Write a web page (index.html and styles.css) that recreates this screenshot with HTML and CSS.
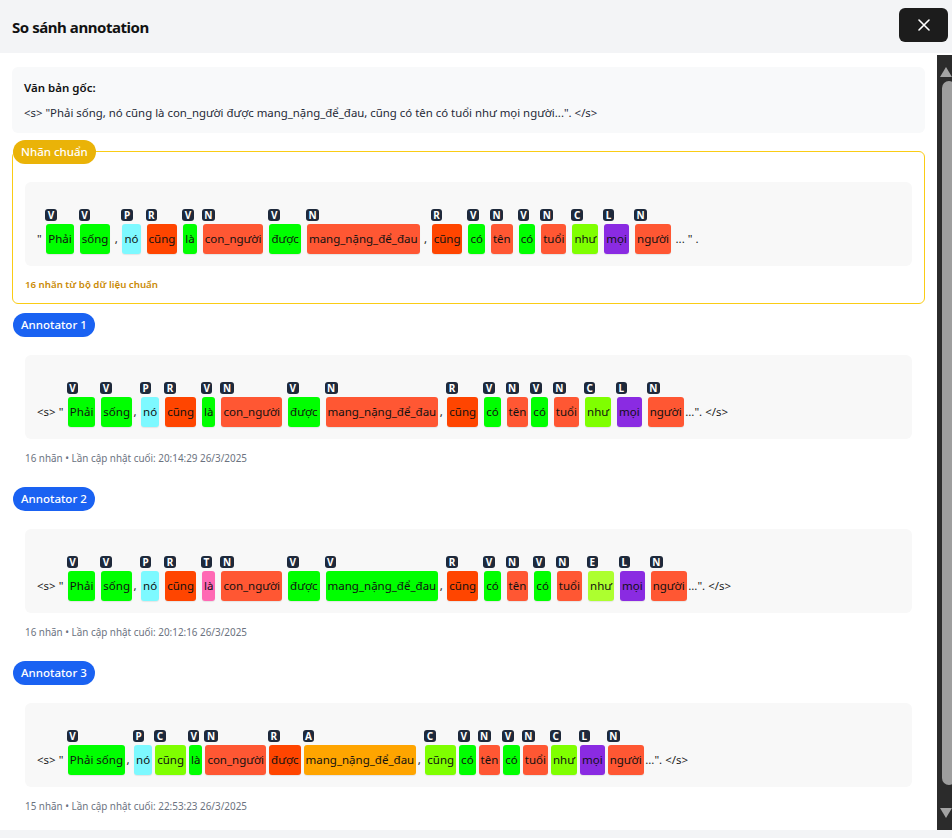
FILE: index.html
```html
<!DOCTYPE html>
<html lang="vi">
<head>
<meta charset="utf-8">
<title>So sánh annotation</title>
<link rel="stylesheet" href="styles.css">
</head>
<body>
<div class="modal">
  <div class="header">
    <h2 class="title">So sánh annotation</h2>
    <button class="close" aria-label="Đóng"><svg width="12" height="12" viewBox="0 0 12 12"><path d="M1 1L11 11M11 1L1 11" stroke="#fff" stroke-width="1.6" stroke-linecap="round" fill="none"/></svg></button>
  </div>
  <div class="body">
    <div class="content">
      <div class="orig">
        <div class="orig-title">Văn bản gốc:</div>
        <div class="orig-text">&lt;s&gt; &quot;Phải sống, nó cũng là con_người được mang_nặng_để_đau, cũng có tên có tuổi như mọi người...&quot;. &lt;/s&gt;</div>
      </div>

      <div class="gold">
        <span class="badge badge-gold">Nhãn chuẩn</span>
        <div class="row"><span class="txt">&quot;</span> <span class="tok"><span class="lab">V</span><span class="box cV">Phải</span></span> <span class="tok"><span class="lab">V</span><span class="box cV">sống</span></span> <span class="txt">,</span> <span class="tok"><span class="lab">P</span><span class="box cP">nó</span></span> <span class="tok"><span class="lab">R</span><span class="box cR">cũng</span></span> <span class="tok"><span class="lab">V</span><span class="box cV">là</span></span> <span class="tok"><span class="lab">N</span><span class="box cN">con_người</span></span> <span class="tok"><span class="lab">V</span><span class="box cV">được</span></span> <span class="tok"><span class="lab">N</span><span class="box cN">mang_nặng_để_đau</span></span> <span class="txt">,</span> <span class="tok"><span class="lab">R</span><span class="box cR">cũng</span></span> <span class="tok"><span class="lab">V</span><span class="box cV">có</span></span> <span class="tok"><span class="lab">N</span><span class="box cN">tên</span></span> <span class="tok"><span class="lab">V</span><span class="box cV">có</span></span> <span class="tok"><span class="lab">N</span><span class="box cN">tuổi</span></span> <span class="tok"><span class="lab">C</span><span class="box cC">như</span></span> <span class="tok"><span class="lab">L</span><span class="box cL">mọi</span></span> <span class="tok"><span class="lab">N</span><span class="box cN">người</span></span> <span class="txt">... &quot; .</span></div>
        <div class="gold-foot">16 nhãn từ bộ dữ liệu chuẩn</div>
      </div>

      <div class="annot">
        <span class="badge badge-blue">Annotator 1</span>
        <div class="annot-body">
          <div class="row"><span class="txt">&lt;s&gt; &quot;</span> <span class="tok"><span class="lab">V</span><span class="box cV">Phải</span></span> <span class="tok"><span class="lab">V</span><span class="box cV">sống</span></span><span class="txt">,</span> <span class="tok"><span class="lab">P</span><span class="box cP">nó</span></span> <span class="tok"><span class="lab">R</span><span class="box cR">cũng</span></span> <span class="tok"><span class="lab">V</span><span class="box cV">là</span></span> <span class="tok"><span class="lab">N</span><span class="box cN">con_người</span></span> <span class="tok"><span class="lab">V</span><span class="box cV">được</span></span> <span class="tok"><span class="lab">N</span><span class="box cN">mang_nặng_để_đau</span></span><span class="txt">,</span> <span class="tok"><span class="lab">R</span><span class="box cR">cũng</span></span> <span class="tok"><span class="lab">V</span><span class="box cV">có</span></span> <span class="tok"><span class="lab">N</span><span class="box cN">tên</span></span><span class="tok"><span class="lab">V</span><span class="box cV">có</span></span> <span class="tok"><span class="lab">N</span><span class="box cN">tuổi</span></span> <span class="tok"><span class="lab">C</span><span class="box cC">như</span></span> <span class="tok"><span class="lab">L</span><span class="box cL">mọi</span></span> <span class="tok"><span class="lab">N</span><span class="box cN">người</span></span><span class="txt">...&quot;. &lt;/s&gt;</span></div>
          <div class="meta">16 nhãn • Lần cập nhật cuối: 20:14:29 26/3/2025</div>
        </div>
      </div>

      <div class="annot">
        <span class="badge badge-blue">Annotator 2</span>
        <div class="annot-body">
          <div class="row"><span class="txt">&lt;s&gt; &quot;</span> <span class="tok"><span class="lab">V</span><span class="box cV">Phải</span></span> <span class="tok"><span class="lab">V</span><span class="box cV">sống</span></span><span class="txt">,</span> <span class="tok"><span class="lab">P</span><span class="box cP">nó</span></span> <span class="tok"><span class="lab">R</span><span class="box cR">cũng</span></span> <span class="tok"><span class="lab">T</span><span class="box cT">là</span></span> <span class="tok"><span class="lab">N</span><span class="box cN">con_người</span></span> <span class="tok"><span class="lab">V</span><span class="box cV">được</span></span> <span class="tok"><span class="lab">V</span><span class="box cV">mang_nặng_để_đau</span></span><span class="txt">,</span> <span class="tok"><span class="lab">R</span><span class="box cR">cũng</span></span> <span class="tok"><span class="lab">V</span><span class="box cV">có</span></span> <span class="tok"><span class="lab">N</span><span class="box cN">tên</span></span> <span class="tok"><span class="lab">V</span><span class="box cV">có</span></span> <span class="tok"><span class="lab">N</span><span class="box cN">tuổi</span></span> <span class="tok"><span class="lab">E</span><span class="box cE">như</span></span> <span class="tok"><span class="lab">L</span><span class="box cL">mọi</span></span> <span class="tok"><span class="lab">N</span><span class="box cN">người</span></span><span class="txt">...&quot;. &lt;/s&gt;</span></div>
          <div class="meta">16 nhãn • Lần cập nhật cuối: 20:12:16 26/3/2025</div>
        </div>
      </div>

      <div class="annot">
        <span class="badge badge-blue">Annotator 3</span>
        <div class="annot-body">
          <div class="row"><span class="txt">&lt;s&gt; &quot;</span> <span class="tok"><span class="lab">V</span><span class="box cV">Phải sống</span></span><span class="txt">,</span> <span class="tok"><span class="lab">P</span><span class="box cP">nó</span></span><span class="tok"><span class="lab">C</span><span class="box cC">cũng</span></span><span class="tok"><span class="lab">V</span><span class="box cV">là</span></span><span class="tok"><span class="lab">N</span><span class="box cN">con_người</span></span><span class="tok"><span class="lab">R</span><span class="box cR">được</span></span><span class="tok"><span class="lab">A</span><span class="box cA">mang_nặng_để_đau</span></span><span class="txt">,</span> <span class="tok"><span class="lab">C</span><span class="box cC">cũng</span></span><span class="tok"><span class="lab">V</span><span class="box cV">có</span></span><span class="tok"><span class="lab">N</span><span class="box cN">tên</span></span><span class="tok"><span class="lab">V</span><span class="box cV">có</span></span><span class="tok"><span class="lab">N</span><span class="box cN">tuổi</span></span><span class="tok"><span class="lab">C</span><span class="box cC">như</span></span><span class="tok"><span class="lab">L</span><span class="box cL">mọi</span></span><span class="tok"><span class="lab">N</span><span class="box cN">người</span></span><span class="txt">...&quot;. &lt;/s&gt;</span></div>
          <div class="meta">15 nhãn • Lần cập nhật cuối: 22:53:23 26/3/2025</div>
        </div>
      </div>
    </div>
    <div class="scroll">
      <div class="arrow-up"></div>
      <div class="thumb"></div>
      <div class="arrow-down"></div>
    </div>
  </div>
  <div class="footer"></div>
</div>
</body>
</html>
```

FILE: styles.css
```css
* { box-sizing: border-box; }
html, body { margin: 0; padding: 0; }
body {
  font-family: "Noto Sans", "Open Sans", sans-serif;
  color: #111827;
  background: #fff;
  width: 952px;
  height: 838px;
  overflow: hidden;
}
.modal { display: flex; flex-direction: column; height: 838px; }
.header {
  height: 53px;
  flex: none;
  background: #f3f4f6;
  display: flex;
  align-items: center;
  justify-content: space-between;
  padding: 0 4px 0 12px;
}
.title { margin: 0; font-size: 15px; font-weight: 700; color: #111; letter-spacing: -0.45px; }
.close {
  width: 49px;
  height: 34px;
  border: 0;
  border-radius: 6px;
  background: #1c1c1c;
  display: flex;
  align-items: center;
  justify-content: center;
  padding: 0;
  margin-top: -3px;
}
.body { flex: 1; display: flex; min-height: 0; }
.content { flex: 1; overflow: hidden; padding: 14px 12px 0; }
.scroll {
  width: 15px;
  flex: none;
  margin-top: 2px;
  background: #2b2b2b;
  overflow: hidden;
  display: flex;
  flex-direction: column;
}
.arrow-up {
  width: 0; height: 0;
  border-left: 6.5px solid transparent;
  border-right: 6.5px solid transparent;
  border-bottom: 10px solid #a3a3a3;
  margin: 12px 0 0 3px;
}
.thumb {
  height: 704px;
  width: 14px;
  margin: 4px 0 0 5px;
  border-radius: 7px;
  background: #9e9e9e;
}
.arrow-down {
  width: 0; height: 0;
  border-left: 6.5px solid transparent;
  border-right: 6.5px solid transparent;
  border-top: 10px solid #a3a3a3;
  margin: 23px 0 0 3px;
}
.footer { height: 8px; flex: none; background: #f3f4f6; }

.orig { background: #f8f9fa; border-radius: 6px; padding: 12px 12px 11px; }
.orig-title { font-size: 11.5px; font-weight: 600; line-height: 18px; color: #111; }
.orig-text { font-size: 11.4px; line-height: 18px; margin-top: 7px; color: #1f2937; }

.badge {
  display: inline-block;
  height: 24px;
  line-height: 24px;
  padding: 0 8px;
  border-radius: 12px;
  color: #fff;
  font-size: 11.5px;
  font-weight: 500;
}
.badge-gold { background: #eab308; }
.badge-blue { background: #1a62f2; }

.gold {
  position: relative;
  margin-top: 18px;
  border: 1px solid #facc15;
  border-radius: 6px;
  padding: 30px 12px 11px;
}
.gold .badge { position: absolute; top: -12px; left: 0; }
.gold-foot { margin-top: 11px; font-size: 9.7px; font-weight: 600; line-height: 15px; color: #ca8a04; }

.annot { margin-top: 8px; padding: 0 1px; }
.annot + .annot { margin-top: 20px; }
.annot-body { margin-top: 18px; padding: 0 12px; }
.meta { margin-top: 12px; font-size: 9.9px; line-height: 15px; color: #6b7280; }

.row {
  background: #f8f8f8;
  border-radius: 6px;
  padding: 27px 12px 12px;
  font-size: 11.5px;
  line-height: 16px;
  white-space: nowrap;
  color: #1a1a1a;
}
.txt { color: #1a1a1a; }
.tok { display: inline-block; margin: 0 1.5px; }
.lab {
  display: block;
  width: max-content;
  height: 12px;
  line-height: 12px;
  padding: 0 2.5px;
  margin: 0 0 3px -1px;
  border-radius: 3px;
  background: #1e293b;
  color: #fff;
  font-size: 10px;
  font-weight: 700;
}
.box {
  display: block;
  height: 30px;
  line-height: 30px;
  padding: 0 2px;
  border-radius: 3px;
  color: #111;
  box-shadow: 0 1px 1px rgba(0, 0, 0, 0.08);
}
.cV { background: #00ff00; }
.cN { background: #ff5733; }
.cP { background: #7df9ff; }
.cR { background: #ff4500; }
.cC { background: #7fff00; }
.cL { background: #8a2be2; }
.cT { background: #ff69b4; }
.cE { background: #adff2f; }
.cA { background: #ffa500; }
```
